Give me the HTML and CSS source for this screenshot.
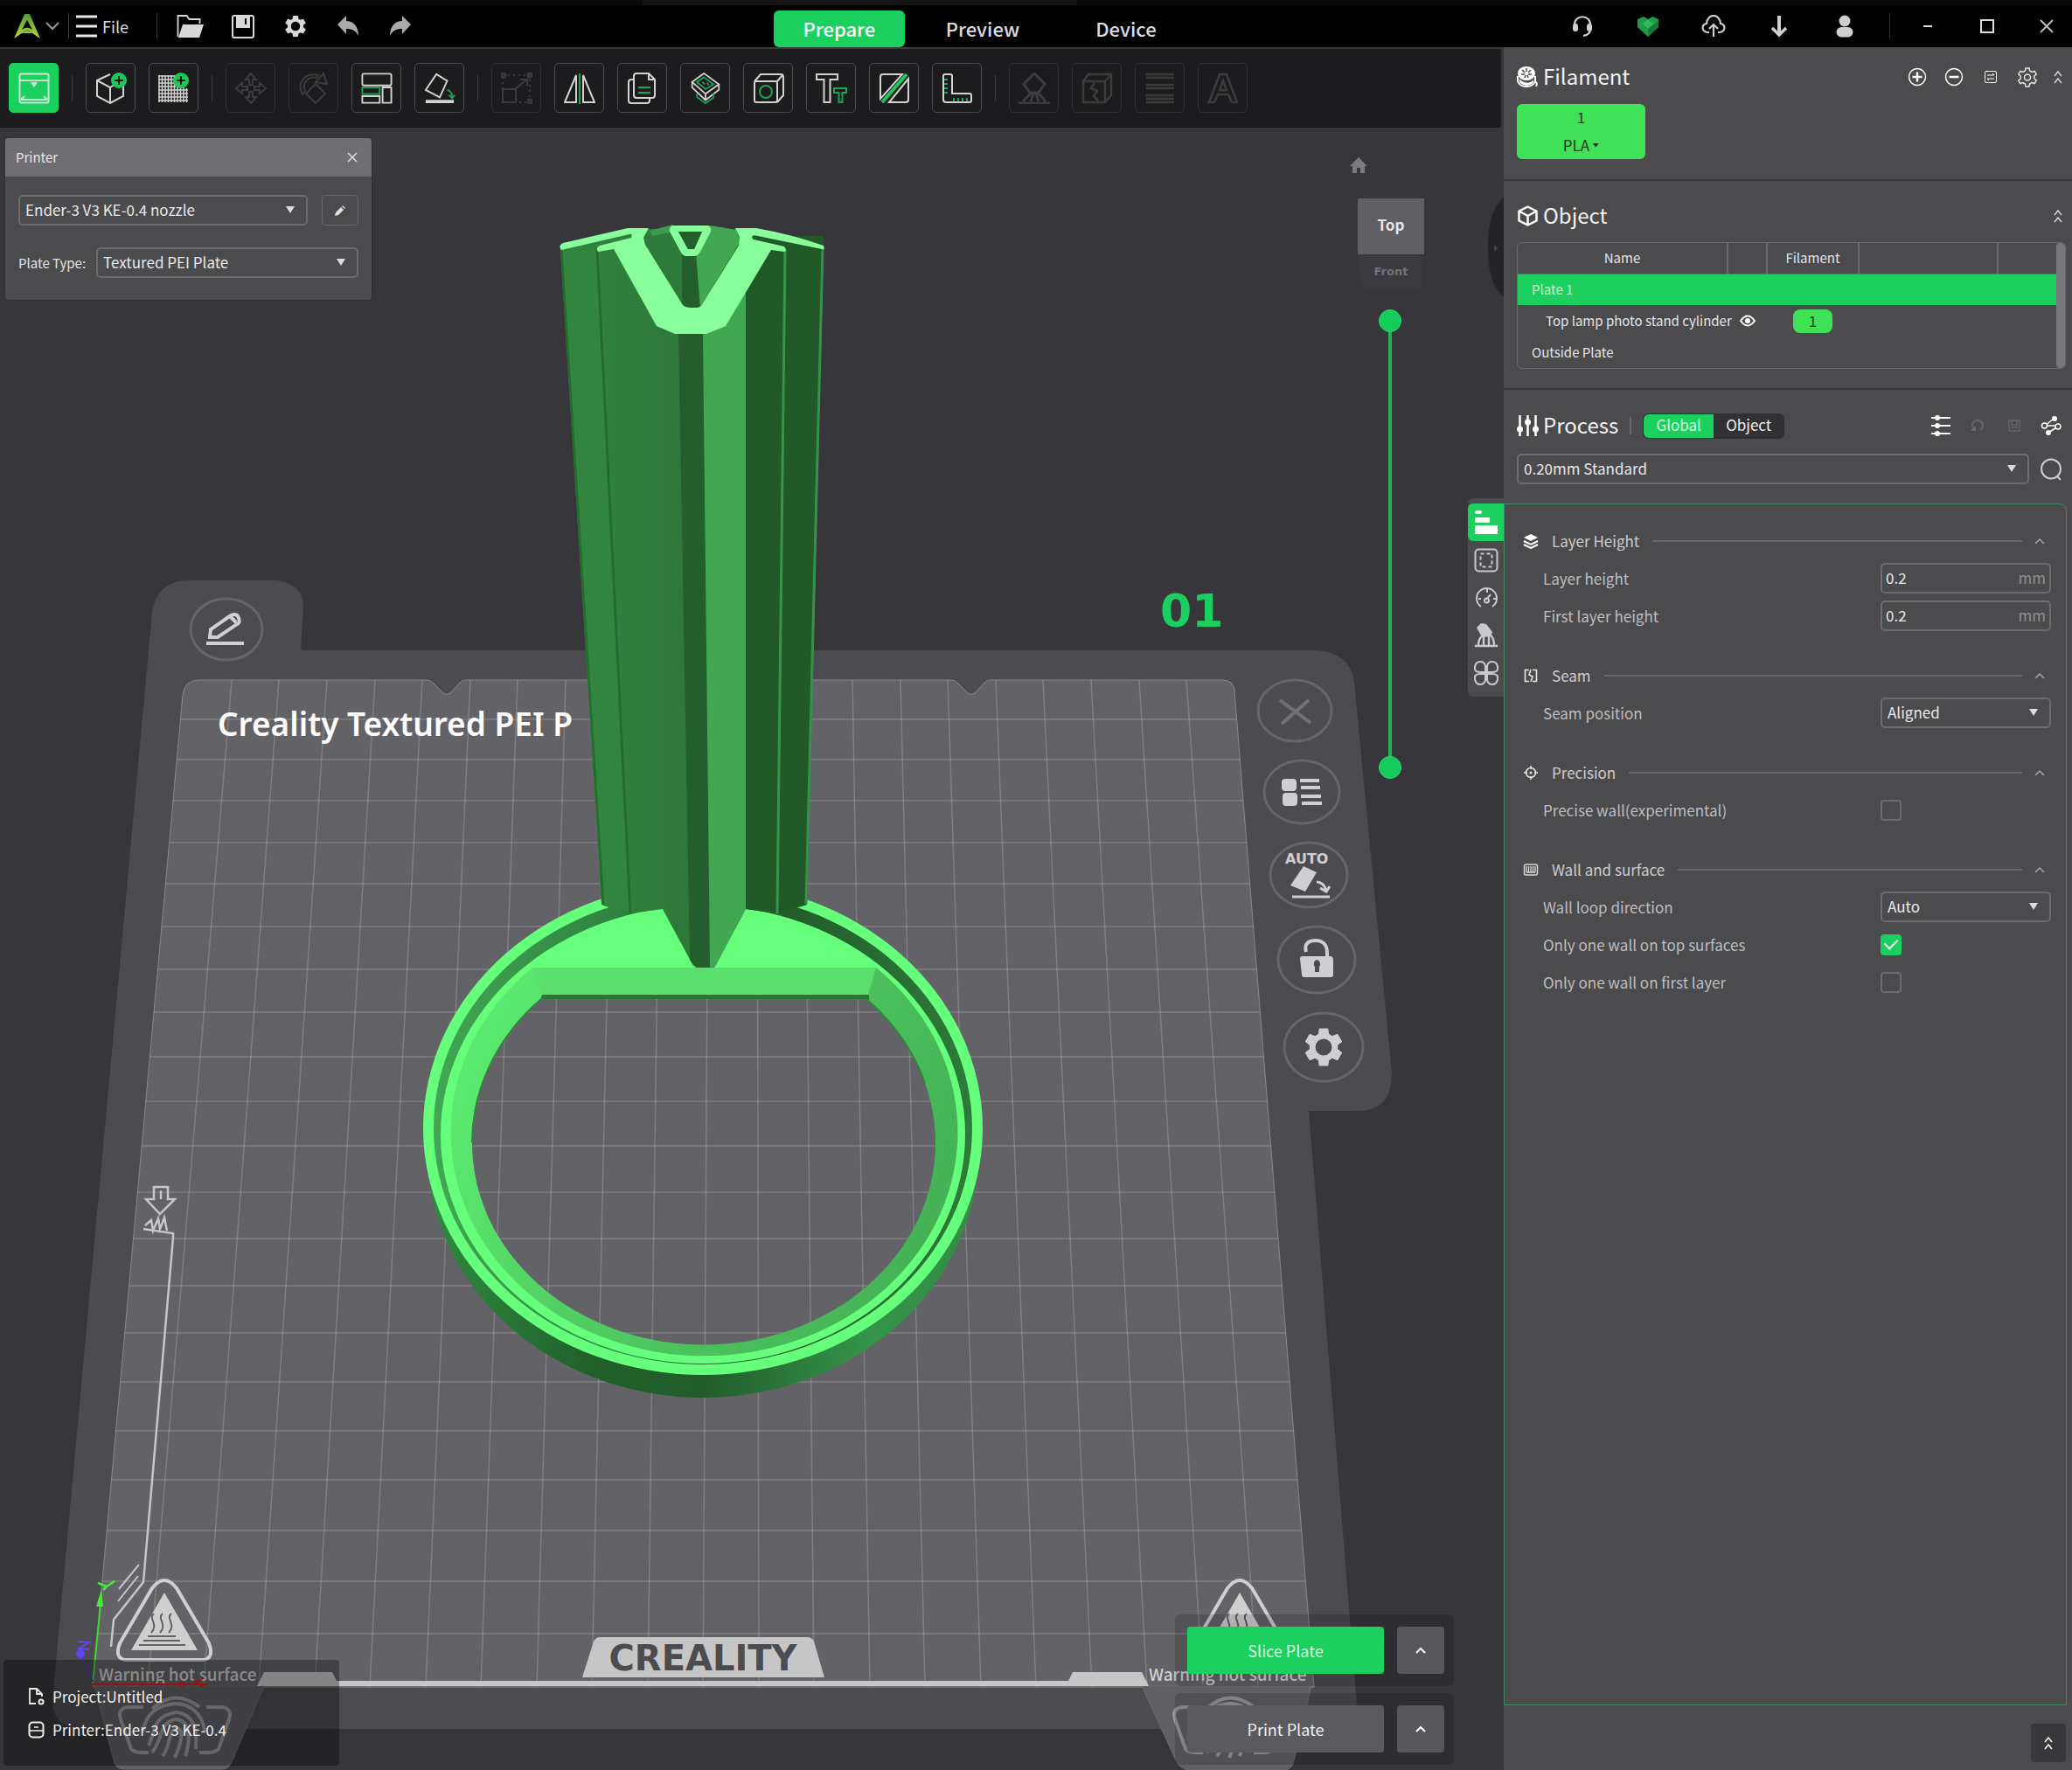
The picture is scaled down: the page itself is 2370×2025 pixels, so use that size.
FILE: index.html
```html
<!DOCTYPE html>
<html lang="en">
<head>
<meta charset="utf-8">
<title>Creality Print</title>
<link rel="stylesheet" href="styles.css">
</head>
<body>
<svg class="sprite" aria-hidden="true">
  <symbol id="gear" viewBox="0 0 24 24"><path d="M19.14 12.94c.04-.3.06-.61.06-.94 0-.32-.02-.64-.07-.94l2.03-1.58c.18-.14.23-.41.12-.61l-1.92-3.32c-.12-.22-.37-.29-.59-.22l-2.39.96c-.5-.38-1.03-.7-1.62-.94l-.36-2.54c-.04-.24-.24-.41-.48-.41h-3.84c-.24 0-.43.17-.47.41l-.36 2.54c-.59.24-1.13.57-1.62.94l-2.39-.96c-.22-.08-.47 0-.59.22L2.74 8.87c-.12.21-.08.47.12.61l2.03 1.58c-.05.3-.09.63-.09.94s.02.64.07.94l-2.03 1.58c-.18.14-.23.41-.12.61l1.92 3.32c.12.22.37.29.59.22l2.39-.96c.5.38 1.03.7 1.62.94l.36 2.54c.05.24.24.41.48.41h3.84c.24 0 .44-.17.47-.41l.36-2.54c.59-.24 1.13-.56 1.62-.94l2.39.96c.22.08.47 0 .59-.22l1.92-3.32c.12-.22.07-.47-.12-.61l-2.01-1.58zM12 16.2a4.2 4.2 0 1 1 0-8.4 4.2 4.2 0 0 1 0 8.4z"/></symbol>
  <symbol id="up2" viewBox="0 0 12 20"><path d="M2 9l4-5 4 5M2 17l4-5 4 5" fill="none" stroke="currentColor" stroke-width="1.6"/></symbol>
  <symbol id="up1" viewBox="0 0 16 12"><path d="M3 9l5-5 5 5" fill="none" stroke="currentColor" stroke-width="1.5"/></symbol>
</svg>

<header class="titlebar">
  <div class="title-left">
    <button class="brand" aria-label="Creality menu">
      <svg width="30" height="28" viewBox="0 0 30 28"><defs><linearGradient id="lg" x1="0" y1="0" x2="0" y2="1"><stop offset="0" stop-color="#4f9a3c"/><stop offset="1" stop-color="#b5d82e"/></linearGradient></defs><path d="M12 0h6l12 28-9-6H9l-9 6zM15 7L9 18q6-5 12 0z" fill="url(#lg)" fill-rule="evenodd"/><path d="M9 22q6-8 12 0l-6-2z" fill="#6f9e34"/></svg>
      <svg width="16" height="10" viewBox="0 0 16 10"><path d="M1 1l7 7 7-7" fill="none" stroke="#9a9a9a" stroke-width="2"/></svg>
    </button>
    <span class="bar-line"></span>
    <button class="file-menu">
      <svg width="24" height="26" viewBox="0 0 24 26"><path d="M0 2h24M0 13h24M0 24h24" stroke="#e8e8e8" stroke-width="3"/></svg>File
    </button>
    <span class="bar-line file-line"></span>
    <button class="title-icon" aria-label="Open"><svg width="32" height="28" viewBox="0 0 32 28"><path d="M1.500 26V2h10l3 4h12v5" fill="none" stroke="#d8d8d8" stroke-width="1.800"/><path d="M2 27L7 12h24l-5 15z" fill="#d8d8d8"/></svg></button>
    <button class="title-icon" aria-label="Save"><svg width="26" height="27" viewBox="0 0 26 27"><rect x="1" y="1" width="24" height="25" rx="2" fill="none" stroke="#d8d8d8" stroke-width="2"/><path d="M5 1h16v14H5z" fill="#d8d8d8"/><path d="M16 4v7" stroke="#000" stroke-width="2"/></svg></button>
    <button class="title-icon" aria-label="Settings"><svg width="30" height="30" fill="#d8d8d8"><use href="#gear"/></svg></button>
    <button class="title-icon" aria-label="Undo"><svg width="26" height="24" viewBox="0 0 26 24"><path d="M11 0v6c9 0 14 7 14 17-3-6-7-8-14-8v6L1 10z" fill="#aaa"/></svg></button>
    <button class="title-icon" aria-label="Redo"><svg width="26" height="24" viewBox="0 0 26 24"><path d="M15 0v6C6 6 1 13 1 23c3-6 7-8 14-8v6l10-11z" fill="#aaa"/></svg></button>
  </div>
  <nav class="modes">
    <button class="mode active">Prepare</button>
    <button class="mode">Preview</button>
    <button class="mode">Device</button>
  </nav>
  <div class="title-right">
    <button class="account-icon" aria-label="Support"><svg width="24" height="26" viewBox="0 0 24 26"><path d="M3 12C2-1 22-1 21 12v5c0 4-3 6-8 7" fill="none" stroke="#cfcfcf" stroke-width="2.200"/><rect x="1" y="10" width="6" height="9" rx="3" fill="#cfcfcf"/><rect x="17" y="10" width="6" height="9" rx="3" fill="#cfcfcf"/></svg></button>
    <button class="account-icon" aria-label="Favourite"><svg width="26" height="23" viewBox="0 0 26 23"><path d="M13 3L18 0l7 3v9l-12 11L1 12V3l7-3z" fill="#1f9e48"/><path d="M13 3l6 5-6 6-6-6z" fill="#35b85c"/><path d="M25 5v7L13 23v-9z" fill="#157a38"/></svg></button>
    <button class="account-icon" aria-label="Upload"><svg width="28" height="26" viewBox="0 0 28 26"><path d="M9 20H7C0 19 0 11 6 10 7-2 21-2 22 10c6 1 6 9-1 10h-2" fill="none" stroke="#cfcfcf" stroke-width="2.200"/><path d="M14 25V12M9 16l5-5 5 5" fill="none" stroke="#cfcfcf" stroke-width="2.200"/></svg></button>
    <button class="account-icon" aria-label="Download"><svg width="20" height="25" viewBox="0 0 20 25"><path d="M10 0v22" stroke="#cfcfcf" stroke-width="4"/><path d="M2 14l8 8 8-8" fill="none" stroke="#cfcfcf" stroke-width="3.500"/></svg></button>
    <button class="account-icon" aria-label="Account"><svg width="20" height="26" viewBox="0 0 20 26"><circle cx="10" cy="7" r="6.500" fill="#cfcfcf"/><rect x="0.500" y="14" width="19" height="11.500" rx="5.700" fill="#cfcfcf"/></svg></button>
    <span class="bar-line window-line"></span>
    <button class="window-icon" aria-label="Minimize"><svg width="10" height="2"><path d="M0 1h10" stroke="#ddd" stroke-width="2"/></svg></button>
    <button class="window-icon" aria-label="Maximize"><svg width="16" height="16"><rect x="1" y="1" width="14" height="14" fill="none" stroke="#ddd" stroke-width="2"/></svg></button>
    <button class="window-icon" aria-label="Close"><svg width="16" height="16"><path d="M1 1l14 14M15 1L1 15" stroke="#bbb" stroke-width="2"/></svg></button>
  </div>
</header>

<div class="workspace">
  <section class="editor">
    <div class="toolbar">
      <button class="tool on" aria-label="Printer"><svg viewBox="0 0 36 36"><rect x="1.500" y="1.500" width="33" height="33" rx="2" stroke="#c4ecd0"/><path d="M2 9h32M7 27l-4 4M29 27l4 4M3 31h30" stroke="#c4ecd0"/><path d="M14 11h8l-4 6z" fill="#c4ecd0" stroke="none"/></svg></button>
      <span class="tool-line"></span>
      <button class="tool" aria-label="Add model"><svg viewBox="0 0 36 36"><path d="M17 2L2 9v18l15 8 15-8V15M2 9l15 8v18M17 17l5-3"/><circle cx="27" cy="9" r="9" fill="#1ac95c" stroke="none"/><path d="M27 4v10M22 9h10" stroke="#111"/></svg></button>
      <button class="tool" aria-label="Add plate"><svg viewBox="0 0 36 36"><path d="M1 3v31M4.500 3v31M8 3v31M11.500 3v31M15 3v31M18.500 3v31M22 3v31M25.500 3v31M29 3v31M32.500 18v16M0 4h20M0 8h20M0 12h20M0 16h20M0 20h34M0 24h34M0 28h34M0 32h34" stroke-width="1.500"/><circle cx="26" cy="9" r="9" fill="#1ac95c" stroke="none"/><path d="M26 4v10M21 9h10" stroke="#111"/></svg></button>
      <span class="tool-line"></span>
      <button class="tool off" aria-label="Move"><svg viewBox="0 0 36 36"><path d="M18 1l6 7h-4v6h-4V8h-4zM18 35l6-7h-4v-6h-4v6h-4zM1 18l7-6v4h6v4H8v4zM35 18l-7-6v4h-6v4h6v4z"/></svg></button>
      <button class="tool off" aria-label="Rotate"><svg viewBox="0 0 36 36"><path d="M20 13l11 11-11 11L9 24zM5 25C-2 12 8-1 23 3l-2 3C12 4 4 11 8 21zM29 1l4 12-13-2z"/></svg></button>
      <button class="tool" aria-label="Arrange"><svg viewBox="0 0 38 38"><rect x="1.500" y="1.500" width="35" height="14" rx="2"/><rect x="1.500" y="18" width="21" height="8" stroke="#1ba453"/><path d="M26 18h10.500v18.500H26zM1.500 28.500h21v8h-21z"/></svg></button>
      <button class="tool" aria-label="Lay on face"><svg viewBox="0 0 38 38"><path d="M15 2l13 8-9 20L2 21z"/><path d="M28 21c4 1 6 4 6 9M30 27l4 4 3-4" stroke="#1ba453"/><path d="M2 35h34" stroke-width="4"/></svg></button>
      <span class="tool-line"></span>
      <button class="tool off" aria-label="Scale"><svg viewBox="0 0 36 36"><path d="M2 19h15v15H2zM15 20L29 8M22 8h8v7"/><path d="M2 3h31v31H2z" stroke-dasharray="2 4"/><circle cx="3" cy="3" r="2.500"/><circle cx="33" cy="3" r="2.500"/><circle cx="33" cy="33" r="2.500"/></svg></button>
      <button class="tool" aria-label="Mirror"><svg viewBox="0 0 36 36"><path d="M14 3v31H1zM22 3v31h13z"/><path d="M18 1v35" stroke="#1ba453"/></svg></button>
      <button class="tool" aria-label="Clone"><svg viewBox="0 0 36 36"><path d="M11 1h14l7 7v18c0 2-1 3-3 3H11c-2 0-3-1-3-3V4c0-2 1-3 3-3zM25 1v7h7M8 8H5c-2 0-3 1-3 3v21c0 2 1 3 3 3h18c2 0 3-1 3-3v-3"/><path d="M13 17h14M13 23h14" stroke="#1ba453"/></svg></button>
      <button class="tool" aria-label="Hollow"><svg viewBox="0 0 36 40"><path d="M16 1l19 14-17 12L1 12zM1 12v7l17 16 17-13v-7M18 27v8"/><path d="M16 6l12 9-10 6L7 12zM14 12l3 3M20 13l2 3M7 27v4l11 8 10-7v-5" stroke="#1ba453"/></svg></button>
      <button class="tool" aria-label="Boolean"><svg viewBox="0 0 36 36"><path d="M2 10L9 2h23c2 0 3 1 3 3v21l-7 8M4 10h22c1 0 2 1 2 2v20c0 1-1 2-2 2H4c-1 0-2-1-2-2V12c0-1 1-2 2-2zM28 10l6-7"/><circle cx="15" cy="22" r="7" stroke="#1ba453"/></svg></button>
      <button class="tool" aria-label="Text"><svg viewBox="0 0 36 36"><path d="M1 2h24v6h-8.500v26h-7V8H1z"/><path d="M21 18h14v5h-4.500v11h-4V23H21z" stroke="#1ba453"/></svg></button>
      <button class="tool" aria-label="Cut"><svg viewBox="0 0 36 36"><path d="M27 2H5C3 2 2 3 2 5v25zM34 7L12 34h19c2 0 3-1 3-3z"/><path d="M32 2L4 34" stroke="#1ac95c" stroke-width="4"/></svg></button>
      <button class="tool" aria-label="Measure"><svg viewBox="0 0 36 36"><path d="M4 2h6c1 0 2 1 2 2v20h20c1 0 2 1 2 2v6c0 1-1 2-2 2H5c-2 0-3-1-3-3V4c0-1 1-2 2-2z"/><path d="M3 8h4M3 13h4M3 18h4M3 23h4M14 33v-4M19 33v-4M24 33v-4M29 33v-4" stroke="#1ba453"/></svg></button>
      <span class="tool-line"></span>
      <button class="tool off" aria-label="Supports"><svg viewBox="0 0 36 36"><path d="M18 1l12 12-7 10H13L6 13zM14 24L5 33M17 24l-3 9M20 24l3 9M23 24l8 9M0 35h36" stroke-width="3"/></svg></button>
      <button class="tool off" aria-label="Seam"><svg viewBox="0 0 36 36"><path d="M2 10h25v24H2zM2 10l6-8h26v24l-7 8M27 10l7-8M15 12l-4 6 7 3-4 6 5 5" stroke-width="2.500"/></svg></button>
      <button class="tool off" aria-label="Layers"><svg viewBox="0 0 36 36"><path d="M2 2h32M2 6h32M2 14h32M2 18h32M2 26h32M2 30h32M2 34h32" stroke-width="2.500"/></svg></button>
      <button class="tool off" aria-label="Emboss"><svg viewBox="0 0 36 36"><path d="M2 34L14 2h8l12 32h-6l-4-9H12l-4 9zM18 9l-4 11h8z" stroke-width="2.500"/></svg></button>
    </div>

    <div class="stage">
      <svg class="scene" viewBox="0 146 1720 1879" preserveAspectRatio="xMidYMid slice" role="img" aria-label="Build plate with the model">
        <defs>
          <clipPath id="mat"><path d="M228 778H488Q492 778 495 781L507 793Q511 796 515 793L526 781Q529 778 533 778H1088Q1092 778 1095 781L1107 793Q1111 796 1115 793L1126 781Q1129 778 1133 778H1398Q1411 778 1412 790L1503 1930H106L209 795Q211 778 228 778z"/></clipPath>
          <linearGradient id="side" x1="490" x2="1120" y1="0" y2="0" gradientUnits="userSpaceOnUse"><stop offset="0" stop-color="#2f8a3f"/><stop offset=".3" stop-color="#20602a"/><stop offset=".5" stop-color="#235c2b"/><stop offset=".8" stop-color="#34944a"/><stop offset="1" stop-color="#348c44"/></linearGradient>
          <linearGradient id="groove" x1="490" x2="1120" y1="0" y2="0" gradientUnits="userSpaceOnUse"><stop offset="0" stop-color="#42a854"/><stop offset=".35" stop-color="#2f8140"/><stop offset=".65" stop-color="#235c2b"/><stop offset="1" stop-color="#2d7c3a"/></linearGradient>
          <linearGradient id="wall" x1="514" x2="1094" y1="1150" y2="1400" gradientUnits="userSpaceOnUse"><stop offset="0" stop-color="#5df072"/><stop offset=".4" stop-color="#52cf64"/><stop offset="1" stop-color="#43b054"/></linearGradient>
          <linearGradient id="face" x1="0" x2="1" y1="0" y2="0"><stop offset="0" stop-color="#31853e"/><stop offset=".5" stop-color="#2e773a"/><stop offset="1" stop-color="#307d3c"/></linearGradient>
          <mask id="hole" maskUnits="userSpaceOnUse" x="400" y="900" width="900" height="800"><path d="M400 900h900v800H400z" fill="#fff"/><path d="M619 1143A265 231 0 1 0 991 1143z" fill="#000"/></mask>
          <g id="warning"><path d="M14-48Q0-66-14-48L-51 15Q-58 34-42 34H42Q58 34 51 15z" fill="none" stroke="#cfcfcf" stroke-width="4"/><path d="M0-43L38 23H-38z" fill="#cfcfcf"/><path d="M-12-19c-7 6 6 12-3 22M-2-19c-7 6 6 12-3 22M8-19c-7 6 6 12-3 22M-19 7h32M-24 12h42M-29 17h53" fill="none" stroke="#626166" stroke-width="2"/></g>
          <g id="print"><path d="M-36-22H-54Q-66-20-62-8L-50 26Q-46 30-38 30H-30M36-22H54Q66-20 62-8L50 26Q46 30 38 30H28" fill="none" stroke-width="4"/><path d="M-26-20Q0-44 28-22M-36 6C-34-14-20-24 0-26 18-26 32-14 34 6M-30 22C-22 6-26-12 2-16 22-14 26 4 24 26M-26 30C-14 16-18-6 2-8 18-6 18 16 12 34M-14 34C-4 22-8 4 2 2 12 4 6 22 0 36" fill="none" stroke-width="4"/></g>
        </defs>
        <path d="M0 146h1720v1879H0z" fill="#37363a"/>
        <path d="M174 700Q180 664 216 664H316Q347 668 347 694L344 744H1505Q1544 746 1549 780L1592 1228Q1592 1270 1555 1271H1497L1552 1950Q1552 1978 1530 1978H90Q60 1975 60 1945z" fill="#4c4b50"/>
        <path d="M228 778H488Q492 778 495 781L507 793Q511 796 515 793L526 781Q529 778 533 778H1088Q1092 778 1095 781L1107 793Q1111 796 1115 793L1126 781Q1129 778 1133 778H1398Q1411 778 1412 790L1503 1930H106L209 795Q211 778 228 778z" fill="#636267" stroke="#8a898d" stroke-width="1"/>
        <g clip-path="url(#mat)" stroke="#fff" stroke-opacity=".18" stroke-width="1.500" fill="none">
          <path d="M100 823H1510M100 869H1510M100 916H1510M100 964H1510M100 1011H1510M100 1060H1510M100 1109H1510M100 1158H1510M100 1209H1510M100 1260H1510M100 1311H1510M100 1364H1510M100 1417H1510M100 1471H1510M100 1525H1510M100 1581H1510M100 1637H1510M100 1693H1510M100 1751H1510M100 1809H1510M100 1869H1510"/>
          <path d="M265 778L169 1930M319 778L233 1930M374 778L296 1930M429 778L360 1930M483 778L423 1930M538 778L487 1930M592 778L550 1930M647 778L614 1930M702 778L677 1930M756 778L741 1930M811 778L804 1930M866 778L868 1930M920 778L931 1930M975 778L995 1930M1030 778L1058 1930M1084 778L1122 1930M1139 778L1185 1930M1193 778L1249 1930M1248 778L1312 1930M1303 778L1376 1930M1357 778L1439 1930"/>
        </g>
        <text class="plate-name" x="249" y="842">Creality Textured PEI P</text>
        <text class="plate-number" x="1327" y="717">01</text>

        <g fill="none" stroke="#66656a" stroke-width="3">
          <ellipse cx="259" cy="720" rx="41" ry="35"/><ellipse cx="1481" cy="813" rx="42" ry="35"/><ellipse cx="1489" cy="906" rx="43" ry="36"/><ellipse cx="1497" cy="1001" rx="44" ry="37"/><ellipse cx="1506" cy="1098" rx="44" ry="38"/><ellipse cx="1514" cy="1198" rx="45" ry="39"/>
        </g>
        <path d="M1464 801l35 26M1497 801l-31 27" stroke="#727176" stroke-width="4"/>
        <g fill="none" stroke="#cfcfd2" stroke-width="4"><path d="M240 729l1-9 23-16q7-3 9 3t-2 7l-22 15zM236 736h43M263 705l7 7"/></g>
        <g fill="#cfcfd2"><rect x="1466" y="891" width="17" height="14" rx="4"/><rect x="1467" y="907" width="17" height="15" rx="4"/><path d="M1487 891h22v4h-22zM1488 899h22v4h-22zM1488 909h23v4h-23zM1489 917h23v4h-23z"/></g>
        <text class="auto-label" x="1470" y="988">AUTO</text>
        <path d="M1491 991l15 7-13 22-17-7z" fill="#cfcfd2"/><path d="M1478 1026h43M1506 1009c6 0 9 3 11 10M1510 1016l7 4 4-6" fill="none" stroke="#cfcfd2" stroke-width="3"/>
        <path d="M1494 1089c-3-10 4-13 11-13s13 4 13 14v5" fill="none" stroke="#cfcfd2" stroke-width="4"/><path d="M1490 1094h32q2 0 3 3v18q0 3-3 3h-30q-3 0-3-3l-2-18q0-3 3-3z" fill="#cfcfd2"/><path d="M1506 1098a5 5 0 0 1 3 8v6h-5v-6a5 5 0 0 1 2-8z" fill="#4c4b50"/>
        <use href="#gear" x="1487" y="1171" width="54" height="54" fill="#cfcfd2"/>

        <path d="M176 1358h16v14h8l-17 17-16-17h9zM184 1362v10M166 1402l7-6 2 12 6-14 2 12 5-13 3 15M164 1406l34 5v5L164 1810 130 1853 127 1884" fill="none" stroke="#c6c6c8" stroke-width="2.500"/>
        <path d="M159 1790l-23 28M158 1803l-23 29" stroke="#c6c6c8" stroke-width="2"/>
        <use href="#warning" x="188" y="1865"/><use href="#warning" x="1418" y="1865"/>
        <path d="M108 1929H302L266 2014Q262 2024 254 2024H142Q132 2024 130 2014zM1306 1929H1500L1480 2014Q1478 2025 1468 2025H1362Q1350 2025 1345 2014z" fill="#605f64" stroke="#6c6b70"/>
        <g stroke="#99989b"><use href="#print" x="200" y="1975"/><use href="#print" x="1406" y="1975"/></g>
        <path d="M294 1929L302 1913H380L385 1923H1222L1227 1913H1306L1314 1929z" fill="#c6c6c6"/>
        <path d="M666 1919L679 1878Q681 1873 687 1873H923Q929 1873 931 1878L943 1919z" fill="#c6c6c6"/>
        <text class="plate-brand" x="804" y="1911" text-anchor="middle">CREALITY</text>
        <text class="plate-warning" x="113" y="1923">Warning hot surface</text>
        <text class="plate-warning" x="1314" y="1923">Warning hot surface</text>

        <g mask="url(#hole)">
          <ellipse cx="804" cy="1317" rx="315" ry="282" fill="url(#side)"/>
          <ellipse cx="804" cy="1291" rx="320" ry="282" fill="#66ff7c"/>
          <ellipse cx="804" cy="1291" rx="308" ry="270" fill="url(#groove)"/>
          <ellipse cx="804" cy="1298" rx="300" ry="262" fill="#66ff7c"/>
          <path d="M609 1107A290 256 0 1 0 1002 1107z" fill="url(#wall)"/>
          <path d="M609 1107H1002L993 1139H620z" fill="#5ade6d"/>
          <path d="M620 1138H994V1144H618z" fill="#2a7436"/>
        </g>
        <path d="M619 1143A265 231 0 0 0 540 1307M991 1143A265 231 0 0 1 1058 1239" fill="none" stroke="#318640" stroke-width="2"/>
        <path d="M641 284L688 1035 720 1045 758 1040 793 1105 817 1107 853 1040 889 1045 923 1035 942 284 845 262H718z" fill="url(#face)"/>
        <path d="M641 284L683 286 722 1045 690 1036z" fill="#31853e"/>
        <path d="M683 286L721 1045" stroke="#23682d" stroke-width="2.500"/><path d="M642 284L690 1035" stroke="#236b2f" stroke-width="2.500"/>
        <path d="M776 380L804 380 813 1107H796L789 1098z" fill="#235e2c"/>
        <path d="M804 380L853 270V1040L818 1106H812z" fill="#41a753"/>
        <path d="M853 270H942L923 1035 889 1045 853 1040z" fill="#215928"/>
        <path d="M898 286L889 1045" stroke="#38944a" stroke-width="3"/><path d="M941 284L922 1034" stroke="#35924a" stroke-width="3"/>
        <path d="M737 272L744 264 770 258H812L842 263 847 276 800 352H782z" fill="#2e7a3a"/>
        <path d="M812 258L842 263 847 276 800 352 796 290z" fill="#41a753"/>
        <path d="M743 264L770 257V265L746 270z" fill="#3c9b4c"/>
        <path d="M780 290H796L801 353H780z" fill="#235e2c"/>
        <path d="M702 285L684 288Q681 283 686 281L722 272Q724 267 720 268L642 286Q638 281 644 278L718 261H742L736 272 738 280 781 349Q784 352 790 352H797Q801 352 803 348L845 281 846 271 841 261H865Q905 268 942 281 944 286 940 285L862 269Q858 271 862 274L897 282Q901 287 897 288L882 286 830 373 808 382H772L751 373z" fill="#88ff9a"/>
        <path d="M769 258H810Q814 260 813 265L801 288Q798 293 794 293H784Q780 292 778 287L766 265Q765 260 769 258zM776 265L787 285H794L803 265z" fill="#88ff9a" fill-rule="evenodd"/><path d="M776 265L787 285H794L803 265z" fill="#235e2c"/>

        <path d="M106 1926L115 1835" stroke="#3fdc30" stroke-width="2"/><path d="M110 1838h8l-2-20z" fill="#44ea34"/><path d="M112 1811l10 4 9-6M122 1815l-4 4" fill="none" stroke="#44ea34" stroke-width="2.500"/>
        <path d="M106 1924L92 1892" stroke="#4a3fae" stroke-width="2"/><ellipse cx="92" cy="1892" rx="5" ry="5" fill="#5f48f0"/><path d="M89 1878l13 1-12 7 12 1" fill="none" stroke="#5f48f0" stroke-width="2"/>
        <path d="M106 1927H238" stroke="#e01818" stroke-width="2"/><path d="M200 1927l10-4v7z" fill="#f01818"/><path d="M222 1922l11 8M232 1920l-9 7" stroke="#f01818" stroke-width="2"/>

        <path d="M1544 190l10-10 10 10h-3v8h-5v-6h-4v6h-5v-8z" fill="#7b7b80"/>
        <path d="M1553 227h76v64h-76z" fill="#605f64"/><path d="M1554 293h74l-2 36h-70z" fill="#3b3a3e"/>
        <text class="cube-top" x="1591" y="264" text-anchor="middle">Top</text>
        <text class="cube-front" x="1591" y="315" text-anchor="middle">Front</text>
        <path d="M1720 226Q1702 240 1702 283T1720 340z" fill="#242427"/><path d="M1709 280v8l4-4z" fill="#4a4a4e"/>
      </svg>

      <section class="printer-card">
        <header class="card-head"><span>Printer</span><button class="plain" aria-label="Close"><svg width="12" height="12"><path d="M1 1l10 10M11 1L1 11" stroke="#e0e0e0" stroke-width="1.500"/></svg></button></header>
        <div class="card-body">
          <div class="card-row">
            <span class="pick grow"><select aria-label="Printer model"><option>Ender-3 V3 KE-0.4 nozzle</option></select></span>
            <button class="edit" aria-label="Edit printer"><svg width="14" height="14" viewBox="0 0 14 14"><path d="M1 13l1-4 6-6 3 3-6 6zM9 2l1-1 3 3-1 1z" fill="#ddd"/></svg></button>
          </div>
          <div class="card-row plate-row">
            <label for="plate">Plate Type:</label>
            <span class="pick grow"><select id="plate"><option>Textured PEI Plate</option></select></span>
          </div>
        </div>
      </section>

      <div class="layer-slider">
        <input type="range" min="0" max="100" value="100" aria-label="Upper layer">
        <input type="range" min="0" max="100" value="0" aria-label="Lower layer">
      </div>

      <div class="side-tabs">
        <button class="side-tab on" aria-label="Quality"><svg width="28" height="28" viewBox="0 0 28 28"><path d="M1 2q0-2 3-2h2q3 0 3 2t-3 2H4q-3 0-3-2zM1 8h17v6H1zM1 17h26v10H1z" fill="#fff"/></svg></button>
        <button class="side-tab" aria-label="Infill"><svg width="28" height="28" viewBox="0 0 28 28"><rect x="1.500" y="1.500" width="25" height="25" rx="4"/><rect x="7.500" y="6.500" width="13" height="15" stroke-dasharray="4 3"/></svg></button>
        <button class="side-tab" aria-label="Speed"><svg width="28" height="28" viewBox="0 0 28 28"><path d="M8 24A11.500 11.500 0 1 1 21 24M15 4v4M5 15h3M22 15h3M19 10l-5 6"/><circle cx="14.500" cy="17" r="2.500"/></svg></button>
        <button class="side-tab" aria-label="Support"><svg width="28" height="28" viewBox="0 0 28 28"><path d="M3 5l5-5 6 1 7 9-2 5-10 1z" fill="#c9c9ce" stroke="none"/><path d="M1 26h26M5 26q0-8 4-11M11 26V15M17 26V14M23 26q0-10-5-13" stroke-width="2.500"/></svg></button>
        <button class="side-tab" aria-label="Others"><svg width="28" height="28" viewBox="0 0 28 28"><path d="M13 13V6q-1-5-6-5T1 7t6 6zM15 13V6q1-5 6-5t6 6-6 6zM13 15v7q-1 5-6 5t-6-6 6-6zM15 15v7q1 5 6 5t6-6-6-6z"/></svg></button>
      </div>

      <div class="info-card">
        <p><svg width="20" height="20" viewBox="0 0 20 20"><path d="M9 18H2V1h8l6 6v3M10 1v6h6" fill="none" stroke="#eee" stroke-width="1.800"/><circle cx="15" cy="16" r="2.500" fill="none" stroke="#eee" stroke-width="2"/></svg>Project:Untitled</p>
        <p><svg width="20" height="20" viewBox="0 0 20 20"><rect x="1.500" y="1.500" width="16" height="17" rx="4" fill="none" stroke="#eee" stroke-width="2"/><path d="M2 11h16M7 7h5" stroke="#eee" stroke-width="1.500"/></svg>Printer:Ender-3 V3 KE-0.4</p>
      </div>

      <div class="actions">
        <div class="action-row"><button class="action go">Slice Plate</button><button class="more" aria-label="Slice options"><svg width="12" height="8"><path d="M1 7l5-5 5 5" fill="none" stroke="#fff" stroke-width="2"/></svg></button></div>
        <div class="action-row"><button class="action">Print Plate</button><button class="more" aria-label="Print options"><svg width="12" height="8"><path d="M1 7l5-5 5 5" fill="none" stroke="#fff" stroke-width="2"/></svg></button></div>
      </div>
    </div>
  </section>

  <aside class="panel">
    <section class="block filament">
      <div class="head">
        <svg width="25" height="24" viewBox="0 0 25 24"><ellipse cx="11" cy="8" rx="10" ry="8" fill="#fff"/><path d="M1 11v6c3 8 17 8 20 0v-6M21 17q3 2 1 6" fill="none" stroke="#fff" stroke-width="2"/><path d="M3 14c4 6 13 6 16 1v3c-3 5-12 5-16 0z" fill="#fff"/><path d="M11 2v4M6 4l3 3M16 4l-3 3M5 9h4M17 9h-4M9 13l1-3M13 13l-1-3" stroke="#4b4b4d" stroke-width="1.500"/></svg>
        <h2>Filament</h2>
        <div class="head-icons">
          <button class="plain" aria-label="Add filament"><svg width="24" height="24"><circle cx="12" cy="12" r="9.500" fill="none" stroke="#fff" stroke-width="1.500"/><path d="M12 6.500v11M6.500 12h11" stroke="#fff" stroke-width="2.500"/></svg></button>
          <button class="plain" aria-label="Remove filament"><svg width="24" height="24"><circle cx="12" cy="12" r="9.500" fill="none" stroke="#fff" stroke-width="1.500"/><path d="M6.500 12h11" stroke="#fff" stroke-width="2.500"/></svg></button>
          <button class="plain" aria-label="Sync filament"><svg width="24" height="24"><rect x="5.500" y="5.500" width="13" height="13" rx="1.500" fill="none" stroke="#fff"/><path d="M8 10h8l-2-2M16 14H8l2 2" fill="none" stroke="#fff"/></svg></button>
          <button class="plain" aria-label="Filament settings"><svg width="24" height="24" viewBox="0 0 24 24" fill="none" stroke="#e4e4e4" stroke-width="1.500"><path d="M10 2h4l.6 3 2.600 1.500 3-1 2 3.500-2.400 2v3l2.400 2-2 3.500-3-1-2.600 1.500-.6 3h-4l-.6-3-2.600-1.500-3 1-2-3.500 2.400-2v-3L1.800 9l2-3.500 3 1L9.400 5z"/><circle cx="12" cy="12.500" r="3.500"/></svg></button>
          <button class="plain fold" aria-label="Collapse"><svg width="12" height="20"><use href="#up2"/></svg></button>
        </div>
      </div>
      <button class="spool"><span>1</span><span>PLA<i class="tiny-arrow"></i></span></button>
    </section>

    <section class="block object">
      <div class="head">
        <svg width="25" height="24" viewBox="0 0 25 24"><path d="M12.500 1.500l10 5v11l-10 5-10-5v-11zM2.500 6.500l10 5.500 10-5.500M12.500 12v10" fill="none" stroke="#fff" stroke-width="2.500" stroke-linejoin="round"/></svg>
        <h2>Object</h2>
        <div class="head-icons"><button class="plain fold" aria-label="Collapse"><svg width="12" height="20"><use href="#up2"/></svg></button></div>
      </div>
      <div class="tree">
        <table>
          <colgroup><col class="c-name"><col class="c-eye"><col class="c-fil"><col class="c-a"><col></colgroup>
          <thead><tr><th>Name</th><th></th><th>Filament</th><th></th><th></th></tr></thead>
          <tbody>
            <tr class="picked"><td colspan="5">Plate 1</td></tr>
            <tr><td class="child">Top lamp photo stand cylinder</td><td class="mid"><svg width="18" height="14" viewBox="0 0 18 14"><path d="M1 7q8-11 16 0-8 11-16 0z" fill="none" stroke="#fff" stroke-width="2"/><circle cx="9" cy="7" r="3" fill="#fff"/></svg></td><td class="mid"><span class="chip">1</span></td><td></td><td></td></tr>
            <tr><td>Outside Plate</td><td></td><td></td><td></td><td></td></tr>
          </tbody>
        </table>
        <span class="scrollbar"></span>
      </div>
    </section>

    <section class="process">
      <div class="head">
        <svg width="25" height="24" viewBox="0 0 25 24"><path d="M3.500 0v24M12.500 0v24M21.500 0v24" stroke="#fff" stroke-width="2.500"/><circle cx="3.500" cy="16" r="3.500" fill="#fff"/><circle cx="12.500" cy="8" r="3.500" fill="#fff"/><circle cx="21.500" cy="16" r="3.500" fill="#fff"/></svg>
        <h2>Process</h2>
        <span class="head-line"></span>
        <div class="segment"><button class="on">Global</button><button>Object</button></div>
        <div class="head-icons process-icons">
          <button class="plain" aria-label="Parameter list"><svg width="24" height="24" viewBox="0 0 24 24"><path d="M1 3h4M10 3h13M1 12h4M10 12h13M1 21h4M10 21h13" stroke="#fff" stroke-width="2"/><circle cx="8" cy="3" r="3" fill="#fff"/><circle cx="8" cy="12" r="3" fill="#fff"/><circle cx="8" cy="21" r="3" fill="#fff"/></svg></button>
          <button class="plain" aria-label="Reset"><svg width="24" height="24"><path d="M9 17a6 6 0 1 1 6 0M9 13v4H5" fill="none" stroke="#666669" stroke-width="2"/></svg></button>
          <button class="plain" aria-label="Save preset"><svg width="24" height="24"><path d="M6 6h12v12H6zM9 6v5h6V6M8 14h8" fill="none" stroke="#666669" stroke-width="1.500"/></svg></button>
          <button class="plain" aria-label="Compare"><svg width="24" height="24"><path d="M5 12L15 4M9 20l11-7M5 12h15" fill="none" stroke="#fff" stroke-width="1.500"/><circle cx="4.500" cy="12" r="3" fill="#4b4b4d" stroke="#fff" stroke-width="1.500"/><circle cx="16" cy="4" r="3" fill="#fff"/><circle cx="20" cy="13" r="3" fill="#4b4b4d" stroke="#fff" stroke-width="1.500"/><circle cx="9" cy="20" r="3" fill="#fff"/></svg></button>
        </div>
      </div>
      <div class="preset">
        <span class="pick grow"><select aria-label="Process preset"><option>0.20mm Standard</option></select></span>
        <button class="plain" aria-label="Search"><svg width="26" height="26"><circle cx="13" cy="12.500" r="11" fill="none" stroke="#cfcfd2" stroke-width="2"/><path d="M20 21l4 4" stroke="#cfcfd2" stroke-width="2"/></svg></button>
      </div>
      <div class="params">
        <section class="group">
          <h3><svg width="18" height="18" viewBox="0 0 18 18"><path d="M9 1l8 4-8 4-8-4z" fill="#fff"/><path d="M1 9l8 4 8-4M1 13l8 4 8-4" fill="none" stroke="#fff" stroke-width="2"/></svg>Layer Height<span class="rule"></span><svg class="caret" width="16" height="12"><use href="#up1"/></svg></h3>
          <div class="param"><label for="lh">Layer height</label><span class="unit-box"><input id="lh" type="text" value="0.2"><span>mm</span></span></div>
          <div class="param"><label for="flh">First layer height</label><span class="unit-box"><input id="flh" type="text" value="0.2"><span>mm</span></span></div>
        </section>
        <section class="group">
          <h3><svg width="18" height="18" viewBox="0 0 18 18"><path d="M7 2.500H2.500v13H7M11 2.500h4.500v13H11M9 2L7 8l4 2-2 6" fill="none" stroke="#e6e6e6" stroke-width="1.600"/></svg>Seam<span class="rule"></span><svg class="caret" width="16" height="12"><use href="#up1"/></svg></h3>
          <div class="param"><label for="seam">Seam position</label><span class="pick"><select id="seam"><option>Aligned</option></select></span></div>
        </section>
        <section class="group">
          <h3><svg width="18" height="18" viewBox="0 0 18 18"><circle cx="9" cy="9" r="5.500" fill="none" stroke="#e6e6e6" stroke-width="1.500"/><circle cx="9" cy="9" r="1.500" fill="#e6e6e6"/><path d="M9 1v4M9 13v4M1 9h4M13 9h4" stroke="#e6e6e6" stroke-width="1.500"/></svg>Precision<span class="rule"></span><svg class="caret" width="16" height="12"><use href="#up1"/></svg></h3>
          <div class="param"><label for="pw">Precise wall(experimental)</label><span class="tick"><input id="pw" type="checkbox"></span></div>
        </section>
        <section class="group">
          <h3><svg width="18" height="18" viewBox="0 0 18 18"><rect x="1.500" y="3" width="15" height="12" rx="2" fill="none" stroke="#d6d6d6" stroke-width="1.500"/><path d="M4 5v7M6.500 5v7M9 5v7M11.500 5v7M14 5v7M4 12h10" stroke="#d6d6d6" stroke-width="1.300"/></svg>Wall and surface<span class="rule"></span><svg class="caret" width="16" height="12"><use href="#up1"/></svg></h3>
          <div class="param"><label for="wl">Wall loop direction</label><span class="pick"><select id="wl"><option>Auto</option></select></span></div>
          <div class="param"><label for="ot">Only one wall on top surfaces</label><span class="tick"><input id="ot" type="checkbox" checked></span></div>
          <div class="param"><label for="of">Only one wall on first layer</label><span class="tick"><input id="of" type="checkbox"></span></div>
        </section>
      </div>
    </section>
    <footer class="panel-foot"><button class="foot-btn" aria-label="Expand"><svg width="12" height="20"><use href="#up2"/></svg></button></footer>
  </aside>
</div>
</body>
</html>
```
FILE: styles.css
```css
* { box-sizing: border-box; }
body { margin: 0; min-height: 100vh; display: flex; flex-direction: column; background: #37363a; color: #e4e4e6; font: 17px/24px "Noto Sans CJK SC", "Noto Sans", sans-serif; }
button, select, input { font: inherit; color: inherit; margin: 0; }
button { background: none; border: 0; padding: 0; cursor: pointer; display: flex; align-items: center; justify-content: center; }
h2, h3, p { margin: 0; font-weight: 400; }
svg { display: block; flex: none; }
.sprite { position: absolute; width: 0; height: 0; }

/* Title bar */
.titlebar { display: flex; height: 54px; padding-top: 6px; background: linear-gradient(90deg, #0a0a0a 31%, #161616 31% 52%, #0a0a0a 52%) top / 100% 6px no-repeat #000; }
.title-left { flex: 0 0 37%; display: flex; align-items: center; padding-left: 16px; }
.brand { gap: 6px; margin-right: 10px; }
.bar-line { width: 1px; height: 30px; background: #3a3a3a; }
.file-menu { gap: 6px; margin-left: 8px; color: #ddd; font-size: 18px; }
.file-line { margin-left: 32px; margin-right: 8px; }
.title-icon { width: 60px; height: 40px; }
.modes { display: flex; gap: 14px; align-items: flex-end; margin-left: 8px; }
.mode { width: 150px; height: 42px; padding-bottom: 2px; border-radius: 6px; font-size: 22px; font-weight: 500; color: #dcdce0; }
.mode.active { background: #1bd05f; color: #fff; }
.title-right { display: flex; align-items: center; margin-left: auto; }
.account-icon { width: 75px; height: 40px; }
.window-line { margin: 0 14px; background: #2e2e2e; }
.window-icon { width: 58px; height: 40px; margin-left: 10px; }
.window-line + .window-icon { margin-left: 0; }

.workspace { flex: 1; display: grid; grid-template-columns: minmax(0, 1fr) 650px; }
.editor { display: flex; flex-direction: column; min-width: 0; }

/* Tool bar */
.toolbar { display: flex; align-items: center; gap: 15px; height: 92px; padding: 0 10px; margin-right: 3px; background: #1c1c1e; border-top: 2px solid #3a3a3d; border-bottom: 1px solid #131315; border-radius: 0 0 4px 0; }
.tool { flex: none; width: 57px; height: 57px; border: 1px solid #4a4a4c; border-radius: 5px; }
.tool svg { width: 36px; height: 36px; fill: none; stroke: #d2d2d2; stroke-width: 2; }
.tool.on { background: #1bd05f; border-color: #1bd05f; }
.tool.off { border-color: #303032; }
.tool.off svg { stroke: #3c3c3e; }
.tool-line { flex: none; width: 1px; height: 30px; background: #3a3a3c; }

/* 3D stage */
.stage { position: relative; flex: 1; min-height: 900px; }
.scene { position: absolute; inset: 0; width: 100%; height: 100%; }
.plate-name { font: 600 37px "Noto Sans", sans-serif; fill: #fff; }
.plate-number { font: bold 52px "DejaVu Sans", sans-serif; fill: #1bd05f; }
.auto-label { font: bold 16px "DejaVu Sans", sans-serif; fill: #cfcfd2; }
.plate-brand { font: bold 40px "DejaVu Sans", sans-serif; fill: #4c4b50; }
.plate-warning { font-size: 19px; font-weight: 500; fill: #cfcfcf; }
.cube-top { font-size: 17px; font-weight: 700; fill: #e6e6e6; }
.cube-front { font: bold 13px "DejaVu Sans", sans-serif; fill: #737277; }

.printer-card { position: absolute; left: 6px; top: 12px; width: 419px; background: #4b4b4d; border-radius: 4px; box-shadow: 0 0 3px #2c2c2e; overflow: hidden; }
.card-head { display: flex; align-items: center; justify-content: space-between; height: 44px; padding: 0 16px 0 12px; background: #6e6e73; font-size: 15px; }
.card-body { padding: 21px 15px 25px; display: grid; gap: 25px; }
.card-row { display: flex; gap: 16px; align-items: center; }
.plate-row { gap: 12px; font-size: 15px; }
.pick { position: relative; display: block; height: 35px; }
.grow { flex: 1; }
.pick::after { content: ""; position: absolute; right: 15px; top: 13px; width: 10px; height: 8px; background: #dcdcde; clip-path: polygon(0 0, 100% 0, 50% 100%); pointer-events: none; }
.pick select { appearance: none; width: 100%; height: 35px; padding: 0 8px 2px 6px; background: none; border: 2px solid #6c6c70; border-radius: 5px; font-size: 17px; color: #e8e8ea; }
.edit { width: 42px; height: 35px; border: 1px solid #66666a; border-radius: 4px; }

.layer-slider { position: absolute; right: 117px; top: 208px; width: 26px; height: 537px; display: grid; background: linear-gradient(#22b35a, #22b35a) center / 4px 510px no-repeat; }
.layer-slider input { grid-area: 1 / 1; appearance: none; writing-mode: vertical-lr; direction: rtl; width: 26px; height: 537px; background: none; pointer-events: none; }
.layer-slider input::-webkit-slider-thumb { appearance: none; width: 26px; height: 26px; border-radius: 50%; background: #15cb5b; border: 1px solid #33d670; pointer-events: auto; }

.side-tabs { position: absolute; right: 0; top: 424px; width: 41px; height: 227px; padding-top: 6px; background: #4b4b4d; border-radius: 6px 0 0 6px; }
.side-tab { width: 41px; height: 43px; }
.side-tab svg { fill: none; stroke: #c9c9ce; stroke-width: 2; }
.side-tab.on { background: #1bd05f; border-radius: 6px 0 0 6px; }
.side-tab.on svg { stroke: none; }

.info-card { position: absolute; left: 4px; bottom: 5px; width: 384px; height: 121px; padding: 23px 28px; display: grid; align-content: start; background: rgba(0, 0, 0, .33); border-radius: 4px; color: #f0f0f0; }
.info-card p { display: flex; align-items: center; gap: 8px; height: 38px; }

.actions { position: absolute; right: 57px; bottom: 6px; display: grid; gap: 8px; }
.action-row { display: flex; gap: 15px; padding: 14px 11px 14px 14px; background: rgba(0, 0, 0, .15); border-radius: 6px; }
.action { width: 225px; height: 54px; border-radius: 4px; background: #5b5a5f; font-size: 18px; color: #f0f0f2; }
.action.go { background: #1bd05f; color: #d8ffe4; }
.more { width: 54px; height: 54px; border-radius: 4px; background: #57565b; }

/* Right panel */
.panel { display: flex; flex-direction: column; background: #4b4b4d; }
.block { border-bottom: 2px solid #39393b; padding: 0 7px 0 15px; }
.filament { height: 153px; padding-top: 16px; }
.object { height: 239px; padding-top: 22px; }
.head { display: flex; align-items: center; gap: 5px; height: 36px; }
h2 { font-size: 24px; line-height: 34px; padding-bottom: 2px; color: #f2f2f2; }
.head-icons { display: flex; gap: 18px; margin-left: auto; align-items: center; }
.plain { color: #d0d0d2; }
.fold { margin-left: -1px; margin-right: 3px; }
.spool { flex-direction: column; width: 147px; height: 63px; padding-bottom: 1px; margin-top: 13px; border-radius: 6px; background: #3fe256; color: #1c3a20; gap: 8px; }
.spool span { display: flex; align-items: center; gap: 3px; }
.tiny-arrow { width: 8px; height: 5px; background: #1c3a20; clip-path: polygon(0 0, 100% 0, 50% 100%); }

.tree { display: flex; height: 145px; margin-top: 12px; border: 1px solid #6a6a6d; border-radius: 6px; overflow: hidden; font-size: 15px; }
.tree table { flex: 1; width: 100%; min-width: 0; table-layout: fixed; border-collapse: collapse; }
.c-name { width: 240px; } .c-eye { width: 45px; } .c-fil { width: 105px; } .c-a { width: 159px; }
.tree th { font-weight: 400; height: 35px; padding: 0; border-right: 2px solid #68686b; border-bottom: 1px solid #68686b; }
.tree th:last-child { border-right: 0; }
.tree td { height: 36px; padding: 0 0 0 16px; white-space: nowrap; }
.tree td.child { padding-left: 32px; }
.tree td.mid { padding: 0; }
.mid svg, .chip { margin: 0 auto; }
.picked { background: #1bd05f; color: #c8ffd8; }
.chip { display: block; width: 45px; height: 27px; border-radius: 8px; background: #3fe256; color: #1c3a20; text-align: center; line-height: 26px; font-size: 17px; }
.scrollbar { flex: none; width: 10px; border-radius: 4px; background: #77777a; }

.process { flex: 1; display: flex; flex-direction: column; padding-top: 23px; }
.process .head { padding: 0 12px 0 15px; }
.head-line { width: 2px; height: 20px; margin: 0 8px; background: #6a6a6d; }
.segment { display: flex; padding: 1px; background: #313133; border-radius: 6px; }
.segment button { width: 80px; height: 27px; padding-bottom: 2px; color: #f0f0f0; }
.segment .on { background: #1bd05f; border-radius: 6px 0 0 6px; color: #d8ffe4; }
.preset { display: flex; gap: 12px; align-items: center; margin-top: 14px; padding: 0 11px 0 15px; }
.params { flex: 1; margin: 22px 6px 0 0; padding: 20px 17px 0 21px; border: 1px solid #3e8660; border-radius: 0 8px 0 0; }
.group { margin-bottom: 25px; }
h3 { display: flex; align-items: center; height: 43px; font-size: 17px; line-height: 24px; color: #cdcdcf; gap: 15px; }
.rule { flex: 1; height: 2px; background: #68686b; }
.caret { color: #aaaaad; margin: 0 5px 0 -3px; }
.param { display: grid; grid-template-columns: minmax(0, 1fr) 195px; align-items: center; height: 43px; padding-left: 23px; color: #bdbdc0; }
.unit-box { display: flex; align-items: center; height: 35px; padding: 0 4px 2px; border: 2px solid #6c6c70; border-radius: 5px; }
.unit-box input { flex: 1; min-width: 0; border: 0; padding: 0; background: none; color: #e8e8ea; }
.unit-box span { color: #8e8e91; font-size: 17px; }
.tick { display: flex; }
.tick input { appearance: none; width: 24px; height: 24px; border: 2px solid #6c6c70; border-radius: 4px; display: grid; place-items: center; }
.tick input:checked { background: #1bd05f; border-color: #1bd05f; }
.tick input:checked::after { content: ""; width: 12px; height: 7px; margin-bottom: 4px; border: solid #fff; border-width: 0 0 2px 2px; rotate: -45deg; }
.panel-foot { height: 74px; display: flex; justify-content: flex-end; align-items: center; padding: 12px 7px 0 0; }
.foot-btn { width: 40px; height: 44px; background: #38383b; border-radius: 4px; color: #fff; }
```
